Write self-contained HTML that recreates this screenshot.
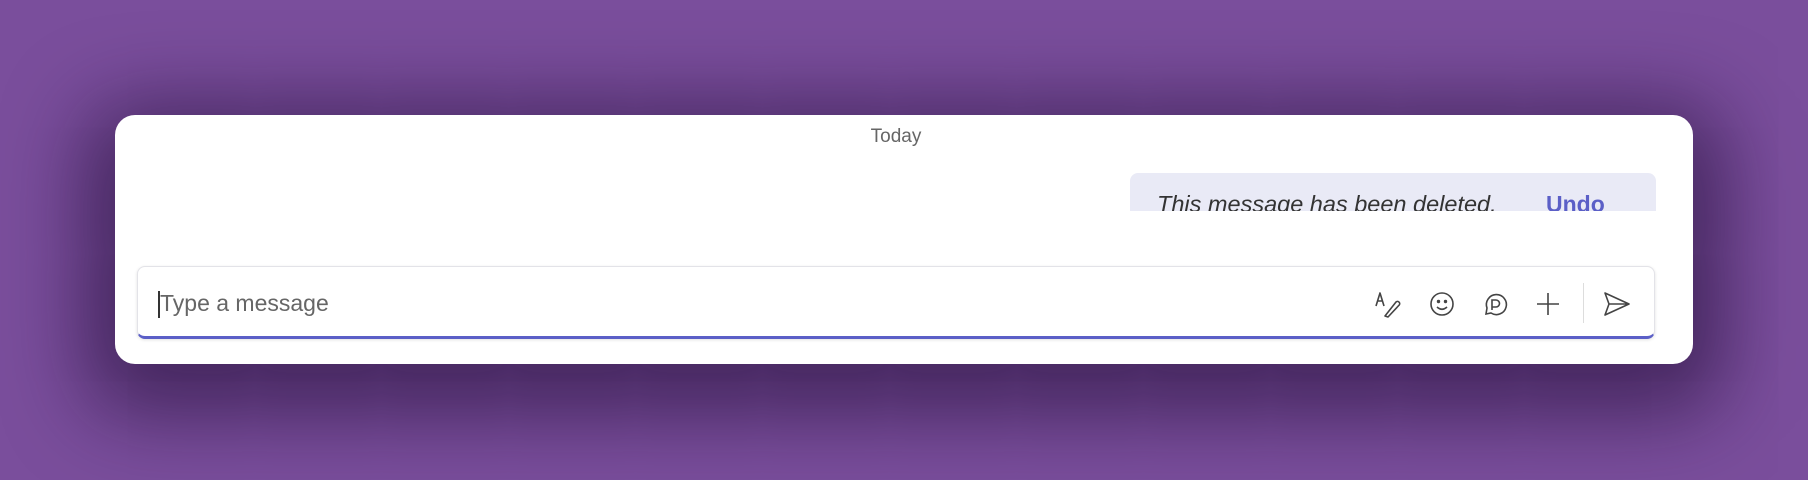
<!DOCTYPE html>
<html><head><meta charset="utf-8"><style>
html,body{margin:0;padding:0}
body{width:1808px;height:480px;overflow:hidden;background:#7a4e9c;position:relative;font-family:"Liberation Sans",sans-serif}
.card{position:absolute;left:115px;top:115px;width:1578px;height:249px;background:#fff;border-radius:20px;box-shadow:0 20px 80px 30px rgba(30,10,50,.6)}
.today{position:absolute;left:-16px;right:0;top:126px;text-align:center;font-size:19px;color:#666}
.bubble{position:absolute;left:1130px;top:173px;width:526px;height:38px;background:#e9eaf6;border-radius:8px 8px 0 0;overflow:hidden}
.bubble .t{position:absolute;left:27px;top:18px;font-size:23.5px;font-style:italic;color:#333}
.bubble .u{position:absolute;left:416px;top:18px;font-size:23px;font-weight:bold;color:#5b5fc7}
.input{position:absolute;left:137px;top:266px;width:1518px;height:73px;background:#fff;border:1px solid #e3e3e8;border-bottom:3px solid #5b5fc7;border-radius:8px;box-sizing:border-box;box-shadow:0 1px 3px rgba(0,0,0,.12)}
.ph{position:absolute;left:160px;top:290px;font-size:23px;color:#666}
.cur{position:absolute;left:158px;top:291px;width:2px;height:27px;background:#333}
svg.i{position:absolute;top:290px}
.sep{position:absolute;left:1583px;top:283px;width:1px;height:40px;background:#ddd}
</style></head><body>
<div class="card"></div>
<div class="today">Today</div>
<div class="bubble"><span class="t">This message has been deleted.</span><span class="u">Undo</span></div>
<div class="input"></div>
<div class="cur"></div>
<div class="ph">Type a message</div>
<svg class="i" style="left:1374px" width="28" height="28" viewBox="0 0 28 28" fill="none" stroke="#444" stroke-width="1.6" stroke-linejoin="round"><path d="M2 16 L6 3 L10 16 M3.5 11 H8.5"/><path d="M11 26 L22 12 a2.2 2.2 0 0 1 3.2 3 L14 27 Z"/></svg>
<svg class="i" style="left:1428px" width="28" height="28" viewBox="0 0 28 28" fill="none" stroke="#444" stroke-width="1.6"><circle cx="14" cy="14" r="11"/><circle cx="10.5" cy="11.5" r=".9" fill="#444"/><circle cx="17.5" cy="11.5" r=".9" fill="#444"/><path d="M9 17 Q14 21.5 19 17"/></svg>
<svg class="i" style="left:1481px" width="28" height="28" viewBox="0 0 28 28" fill="none" stroke="#444" stroke-width="1.6"><path d="M5 24 L6 18 A10 10 0 1 1 10 23 Z"/><path d="M11 20 V10 h4 a3.5 3.5 0 0 1 0 7 h-4"/></svg>
<svg class="i" style="left:1534px" width="28" height="28" viewBox="0 0 28 28" fill="none" stroke="#444" stroke-width="1.6"><path d="M14 3 V25 M3 14 H25"/></svg>
<div class="sep"></div>
<svg class="i" style="left:1602px" width="30" height="28" viewBox="0 0 30 28" fill="none" stroke="#444" stroke-width="1.6" stroke-linejoin="round"><path d="M3 3 L27 14 L3 25 L7 14 Z M7 14 H27"/></svg>
</body></html>
